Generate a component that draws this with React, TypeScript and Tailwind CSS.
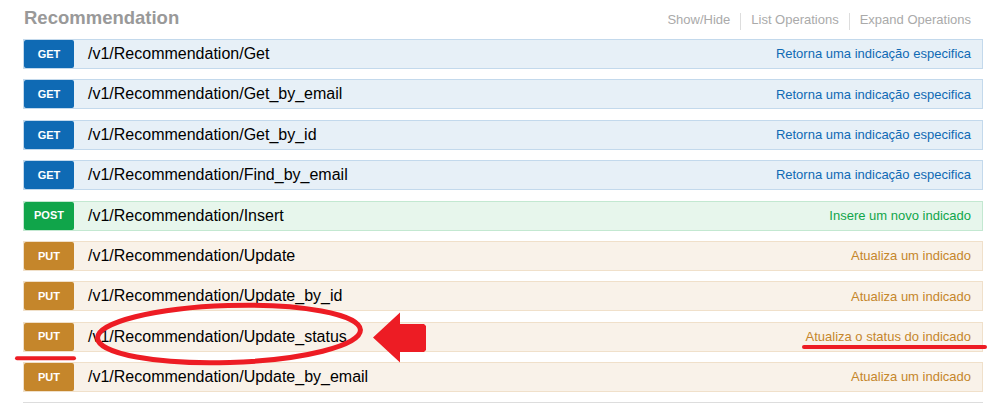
import React from 'react';

type Method = 'GET' | 'POST' | 'PUT';

const methodStyles: Record<Method, { row: string; badge: string; desc: string }> = {
  GET: {
    row: 'bg-[#e7f0f7] border-[#c3d9ec]',
    badge: 'bg-[#0f6ab4]',
    desc: 'text-[#0f6ab4]',
  },
  POST: {
    row: 'bg-[#e7f6ec] border-[#c3e8d1]',
    badge: 'bg-[#10a54a]',
    desc: 'text-[#10a54a]',
  },
  PUT: {
    row: 'bg-[#f9f2e9] border-[#f0e0ca]',
    badge: 'bg-[#c5862b]',
    desc: 'text-[#c5862b]',
  },
};

const operations: { method: Method; path: string; desc: string }[] = [
  { method: 'GET', path: '/v1/Recommendation/Get', desc: 'Retorna uma indicação especifica' },
  { method: 'GET', path: '/v1/Recommendation/Get_by_email', desc: 'Retorna uma indicação especifica' },
  { method: 'GET', path: '/v1/Recommendation/Get_by_id', desc: 'Retorna uma indicação especifica' },
  { method: 'GET', path: '/v1/Recommendation/Find_by_email', desc: 'Retorna uma indicação especifica' },
  { method: 'POST', path: '/v1/Recommendation/Insert', desc: 'Insere um novo indicado' },
  { method: 'PUT', path: '/v1/Recommendation/Update', desc: 'Atualiza um indicado' },
  { method: 'PUT', path: '/v1/Recommendation/Update_by_id', desc: 'Atualiza um indicado' },
  { method: 'PUT', path: '/v1/Recommendation/Update_status', desc: 'Atualiza o status do indicado' },
  { method: 'PUT', path: '/v1/Recommendation/Update_by_email', desc: 'Atualiza um indicado' },
];

function OperationRow({ method, path, desc }: { method: Method; path: string; desc: string }) {
  const s = methodStyles[method];
  return (
    <div className={`flex items-center h-[30px] border ${s.row}`}>
      <span
        className={`self-stretch w-[50px] flex items-center justify-center rounded-[2px] text-white text-[11px] font-bold ${s.badge}`}
      >
        {method}
      </span>
      <span className="ml-[14px] text-[16px] text-black">{path}</span>
      <span className={`ml-auto pr-[11px] text-[13px] ${s.desc}`}>{desc}</span>
    </div>
  );
}

function Annotations() {
  // red marks drawn over the screenshot
  return (
    <svg className="absolute inset-0 pointer-events-none" width="1005" height="408" viewBox="0 0 1005 408">
      <ellipse
        cx="229"
        cy="334"
        rx="131.5"
        ry="28.5"
        transform="rotate(-1.8 229 334)"
        fill="none"
        stroke="#ed1c24"
        strokeWidth="5"
      />
      <polygon
        points="373,337.5 400,312.5 400,324 424,324 426,326 426,350 424,352 400,352 400,362.5"
        fill="#ed1c24"
      />
      <line x1="17" y1="358.3" x2="74" y2="358.3" stroke="#ed1c24" strokeWidth="4" strokeLinecap="round" />
      <line x1="804" y1="347" x2="985" y2="347" stroke="#ed1c24" strokeWidth="4" strokeLinecap="round" />
    </svg>
  );
}

export default function App() {
  return (
    <div className="relative w-[1005px] h-[408px] bg-white overflow-hidden font-['Liberation_Sans',Arial,sans-serif]">
      <div className="ml-[23px] w-[960px]">
        <div className="flex justify-between items-start h-[39px]">
          <h2 className="pl-[1px] pt-[7px] text-[18.5px] leading-[22px] font-bold text-[#999]">Recommendation</h2>
          <div className="flex items-start pt-[12px] pr-[12px] text-[13px] leading-[16px] text-[#aaa]">
            <span>Show/Hide</span>
            <span className="mt-[1px] mx-[10px] w-px h-[17px] bg-[#ddd]" />
            <span>List Operations</span>
            <span className="mt-[1px] mx-[10px] w-px h-[17px] bg-[#ddd]" />
            <span>Expand Operations</span>
          </div>
        </div>
        <div className="flex flex-col gap-[10.375px]">
          {operations.map((op) => (
            <OperationRow key={op.path} {...op} />
          ))}
        </div>
        <div className="mt-[10px] border-t border-[#ddd]" />
      </div>
      <Annotations />
    </div>
  );
}
